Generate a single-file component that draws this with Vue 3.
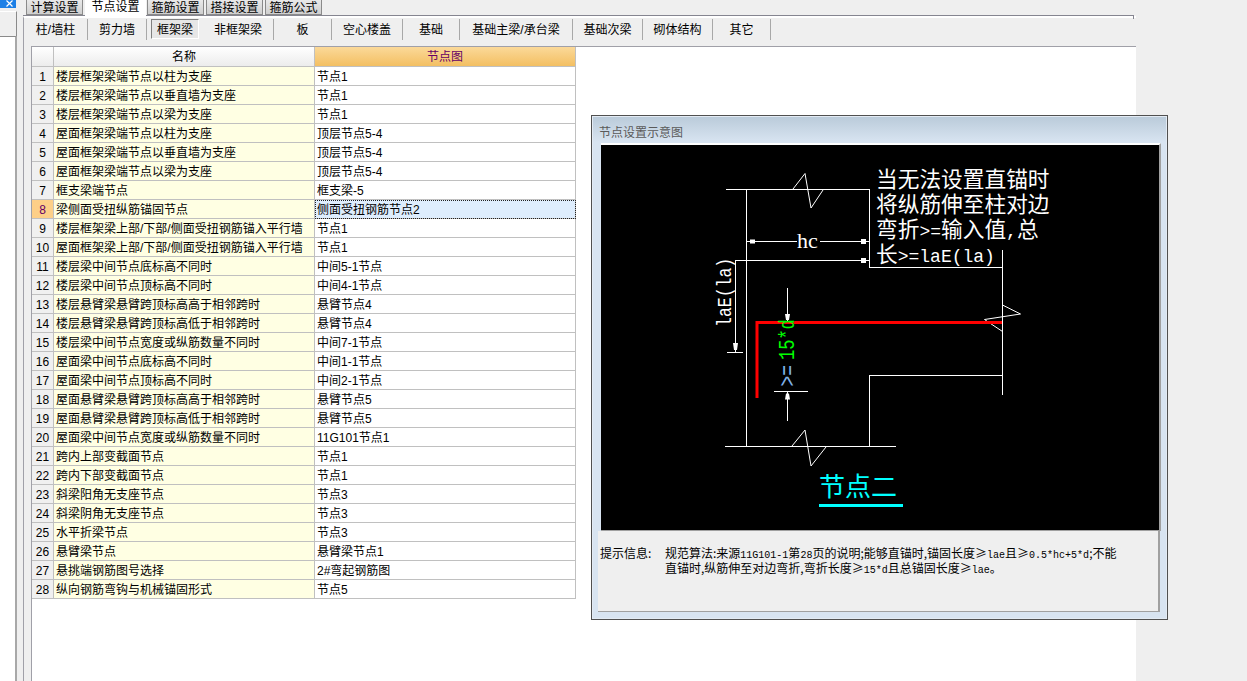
<template>
  <div class="screen">
    <aside class="side">
      <div class="side-close">
        <svg width="16" height="8" viewBox="0 0 16 8">
          <path d="M6.5 0.5L12.5 6.5M12.5 0.5L6.5 6.5" />
        </svg>
      </div>
      <div class="side-head"></div>
      <div class="side-list"></div>
    </aside>

    <main class="main">
      <nav class="tabs">
        <div
          v-for="tab in tabs"
          :key="tab"
          class="tab"
          :class="{ 'tab--active': tab === '节点设置' }"
        >{{ tab }}</div>
      </nav>

      <section class="sheet">
        <div class="subtabs">
          <div
            v-for="item in subTabs"
            :key="item.name"
            class="subtab"
            :class="{ 'subtab--active': item.active }"
            :style="{ width: item.width + 'px' }"
          >{{ item.name }}</div>
        </div>

        <div class="body">
          <div class="gutter"></div>
          <div class="content">
            <div class="grid">
              <div class="cell cell--head"></div>
              <div class="cell cell--head">名称</div>
              <div class="cell cell--head cell--orange">节点图</div>

              <template v-for="(row, index) in rows" :key="index">
                <div class="cell cell--num" :class="{ 'cell--num-on': index === 7 }">{{ index + 1 }}</div>
                <div class="cell cell--name">{{ row[0] }}</div>
                <div class="cell cell--value" :class="{ 'cell--picked': index === 7 }">{{ row[1] }}</div>
              </template>
            </div>
          </div>
        </div>
      </section>
    </main>

    <div class="dialog">
      <div class="dialog-title">节点设置示意图</div>
      <div class="drawing">
        <svg class="cad" width="558" height="385" viewBox="601 145 558 385">
          <g class="lines">
            <path d="M726 189.5H869.5V267.5H1002.5" />
            <path d="M746.5 189.5V446.5" />
            <path d="M1002.5 250V395" />
            <path d="M869.5 446.5V375.5H1002.5" />
            <path d="M725 446.5H896" />
            <path d="M746.5 241.5H797M820 241.5H869" />
            <path d="M735.5 352V260.5H869" />
            <path d="M727 352.5H743" />
            <path d="M787.5 288V322" />
            <path d="M774 391.5H808" />
            <path d="M787.5 391V421" />
          </g>
          <g class="breaks">
            <path d="M793 189L805 173.5L811 208L823 190" />
            <path d="M792 446L805 430L811 466L826 447" />
            <path d="M1002.5 305L1020.5 314L984.5 319.5L1002.5 331.5" />
          </g>
          <g class="heads">
            <path d="M750 239.5h5v4h-5zM861 239h5v5h-5zM861 258h5v5h-5z" />
            <path d="M733 343h5l-1 7h-3zM785 314h5l-1 6h-3zM785 399.5h5l-1-6h-3z" />
          </g>
          <path class="rebar" d="M757 398V322.5H1002" />

          <text class="note" x="876" y="187">当无法设置直锚时</text>
          <text class="note" x="876" y="212">将纵筋伸至柱对边</text>
          <text class="note" x="876" y="237">弯折<tspan class="note-latin">&gt;=</tspan>输入值<tspan class="note-latin">,</tspan>总</text>
          <text class="note" x="876" y="262">长<tspan class="note-latin">&gt;=laE(la)</tspan></text>
          <text class="dim-hc" x="797" y="248">hc</text>
          <text class="dim-side" transform="translate(731 327) rotate(-90) scale(1 1.25)">laE(la)</text>
          <text class="dim-green" transform="translate(794 360) rotate(-90) scale(1 1.25)">15*d</text>
          <text class="dim-blue" transform="translate(795 386.5) rotate(-90) scale(1 1.3)">&gt;=</text>
          <text class="node-name" x="819" y="496">节点二</text>
          <path class="node-line" d="M819 505.5H903" />
        </svg>
      </div>
      <div class="info">
        <div class="info-label">提示信息:</div>
        <div>
          <div>规范算法:来源<span class="lat">11G101-1</span>第<span class="lat">28</span>页的说明;能够直锚时,锚固长度≥<span class="lat">lae</span>且≥<span class="lat">0.5*hc+5*d</span>;不能</div>
          <div>直锚时,纵筋伸至对边弯折,弯折长度≥<span class="lat">15*d</span>且总锚固长度≥<span class="lat">lae</span>。</div>
        </div>
      </div>
    </div>
  </div>
</template>

<script setup>
const tabs = ['计算设置', '节点设置', '箍筋设置', '搭接设置', '箍筋公式']

const subTabs = [
  { name: '柱/墙柱', width: 64 },
  { name: '剪力墙', width: 59 },
  { name: '框架梁', width: 48, active: true },
  { name: '非框架梁', width: 71 },
  { name: '板', width: 58 },
  { name: '空心楼盖', width: 71 },
  { name: '基础', width: 57 },
  { name: '基础主梁/承台梁', width: 113 },
  { name: '基础次梁', width: 70 },
  { name: '砌体结构', width: 70 },
  { name: '其它', width: 58 },
]

const rows = [
  ['楼层框架梁端节点以柱为支座', '节点1'],
  ['楼层框架梁端节点以垂直墙为支座', '节点1'],
  ['楼层框架梁端节点以梁为支座', '节点1'],
  ['屋面框架梁端节点以柱为支座', '顶层节点5-4'],
  ['屋面框架梁端节点以垂直墙为支座', '顶层节点5-4'],
  ['屋面框架梁端节点以梁为支座', '顶层节点5-4'],
  ['框支梁端节点', '框支梁-5'],
  ['梁侧面受扭纵筋锚固节点', '侧面受扭钢筋节点2'],
  ['楼层框架梁上部/下部/侧面受扭钢筋锚入平行墙', '节点1'],
  ['屋面框架梁上部/下部/侧面受扭钢筋锚入平行墙', '节点1'],
  ['楼层梁中间节点底标高不同时', '中间5-1节点'],
  ['楼层梁中间节点顶标高不同时', '中间4-1节点'],
  ['楼层悬臂梁悬臂跨顶标高高于相邻跨时', '悬臂节点4'],
  ['楼层悬臂梁悬臂跨顶标高低于相邻跨时', '悬臂节点4'],
  ['楼层梁中间节点宽度或纵筋数量不同时', '中间7-1节点'],
  ['屋面梁中间节点底标高不同时', '中间1-1节点'],
  ['屋面梁中间节点顶标高不同时', '中间2-1节点'],
  ['屋面悬臂梁悬臂跨顶标高高于相邻跨时', '悬臂节点5'],
  ['屋面悬臂梁悬臂跨顶标高低于相邻跨时', '悬臂节点5'],
  ['屋面梁中间节点宽度或纵筋数量不同时', '11G101节点1'],
  ['跨内上部变截面节点', '节点1'],
  ['跨内下部变截面节点', '节点1'],
  ['斜梁阳角无支座节点', '节点3'],
  ['斜梁阴角无支座节点', '节点3'],
  ['水平折梁节点', '节点3'],
  ['悬臂梁节点', '悬臂梁节点1'],
  ['悬挑端钢筋图号选择', '2#弯起钢筋图'],
  ['纵向钢筋弯钩与机械锚固形式', '节点5'],
]
</script>

<style>
html,
body {
  margin: 0;
  background: #efefef;
  overflow: hidden;
}
</style>

<style scoped>
.screen {
  position: relative;
  display: flex;
  width: 1247px;
  height: 681px;
  overflow: hidden;
  background: #efefef;
  color: #000;
  font-family: "Liberation Sans", "Noto Sans CJK SC", sans-serif;
  font-size: 12px;
}

.side {
  display: flex;
  flex-direction: column;
  flex: none;
  width: 17px;
  box-sizing: border-box;
}

.side-close {
  height: 8px;
  width: 16px;
  background: #1c7fe6;
}

.side-close svg {
  display: block;
}

.side-close path {
  fill: none;
  stroke: #fff;
  stroke-width: 1.2;
}

.side-head {
  height: 25px;
  border-top: 1px solid #fff;
  border-right: 1px solid #8a8a8a;
  margin-top: 3px;
  box-sizing: border-box;
}

.side-list {
  flex: 1;
  background: #fff;
  border-top: 1px solid #8a8a8a;
  border-right: 2px solid #a8a8a8;
}

.main {
  flex: none;
  width: 1119px;
  margin-left: 6px;
  display: flex;
  flex-direction: column;
}

.tabs {
  display: flex;
  height: 15px;
  padding-left: 3px;
  flex: none;
}

.tab {
  width: 57px;
  margin-right: 2px;
  height: 15px;
  box-sizing: border-box;
  border: 1px solid #8a8a8a;
  border-top: 0;
  background: linear-gradient(#e9e9e9, #cfcfcf);
  text-align: center;
  line-height: 17px;
  overflow: hidden;
}

.tab--active {
  width: 61px;
  height: 16px;
  margin-right: 1px;
  position: relative;
  z-index: 1;
  background: #fff;
  border: 0;
  line-height: 15px;
}

.sheet {
  position: relative;
  flex: 1;
  width: 1113px;
  display: flex;
  flex-direction: column;
  border-top: 1px solid #858590;
  box-sizing: border-box;
}

.sheet::before {
  content: "";
  position: absolute;
  top: -1px;
  right: 0;
  width: 2px;
  height: 1px;
  background: #efefef;
}

.sheet::after {
  content: "";
  position: absolute;
  top: -1px;
  right: 2px;
  width: 1px;
  height: 4px;
  background: #858590;
}

.subtabs {
  display: flex;
  align-items: flex-start;
  height: 28px;
  flex: none;
  border-top: 2px solid #fff;
  border-left: 1px solid #a0a0a8;
}

.subtab {
  height: 21px;
  margin-top: 1px;
  box-sizing: border-box;
  border-right: 1px solid #a8a8a8;
  text-align: center;
  line-height: 22px;
}

.subtab--active {
  margin: 1px 4px 0;
  height: 20px;
  border: 1px solid;
  border-color: #808080 #fff #fff #808080;
  background: #e6e6e6;
  line-height: 20px;
}

.body {
  flex: 1;
  display: flex;
  min-height: 0;
}

.gutter {
  width: 7px;
  flex: none;
  border-left: 1px solid #a0a0a8;
}

.content {
  flex: 1;
  background: #fff;
  border-top: 1px solid #a0a0a8;
  border-left: 1px solid #a0a0a8;
}

.grid {
  display: grid;
  grid-template-columns: 22px 261px 261px;
  grid-template-rows: 20px repeat(28, 19px);
  width: 544px;
}

.cell {
  box-sizing: border-box;
  border-right: 1px solid #c0c0c0;
  border-bottom: 1px solid #c0c0c0;
  line-height: 20px;
  white-space: nowrap;
  overflow: hidden;
}

.cell--head {
  background: linear-gradient(#fff, #ececec);
  text-align: center;
  line-height: 21px;
}

.cell--orange {
  background: linear-gradient(#fbd999, #f3bf62);
  color: #660066;
}

.cell--num {
  background: #f0f0f0;
  text-align: center;
}

.cell--num-on {
  background: #fdcf88;
  color: #660066;
}

.cell--name {
  background: #ffffe3;
  padding-left: 2px;
}

.cell--value {
  padding-left: 2px;
}

.cell--picked {
  background: #deedfd;
  outline: 1px dotted #222;
  outline-offset: -1px;
}

.dialog {
  position: absolute;
  left: 591px;
  top: 115px;
  width: 577px;
  height: 505px;
  box-sizing: border-box;
  border: 1px solid #505050;
  box-shadow: inset 0 0 0 1px #e3ebf4;
  background: linear-gradient(#b9cad9, #d8e4f1 26px);
  padding: 1px 8px 0 9px;
}

.dialog-title {
  height: 26px;
  margin-left: -2px;
  color: #5a5a5a;
  line-height: 32px;
}

.drawing {
  width: 558px;
  height: 385px;
  border-top: 2px solid #fff;
  border-right: 2px solid #a0a0a0;
  border-bottom: 1px solid #a0a0a0;
  background: #000;
}

.cad {
  display: block;
}

.lines path,
.breaks path {
  fill: none;
  stroke: #fff;
  stroke-width: 1;
}

.lines path {
  shape-rendering: crispEdges;
}

.heads path {
  fill: #fff;
}

.rebar {
  fill: none;
  stroke: #f00;
  stroke-width: 3;
}

.note {
  fill: #fff;
  font-family: "Noto Sans CJK SC", sans-serif;
  font-size: 21.7px;
}

.note-latin {
  font-family: "Liberation Mono", monospace;
  font-size: 18px;
}

.dim-hc {
  fill: #fff;
  font-family: "Liberation Serif", serif;
  font-size: 22px;
}

.dim-side {
  fill: #fff;
  font-family: "Liberation Mono", monospace;
  font-size: 16.5px;
}

.dim-green {
  fill: #00ff00;
  font-family: "Liberation Mono", monospace;
  font-size: 17px;
}

.dim-blue {
  fill: #7fb0e6;
  font-family: "Liberation Mono", monospace;
  font-size: 18px;
}

.node-name {
  fill: #00ffff;
  font-family: "Noto Sans CJK SC", sans-serif;
  font-size: 26px;
}

.node-line {
  fill: none;
  stroke: #00ffff;
  stroke-width: 3;
}

.info {
  display: flex;
  margin: 0 -3px;
  width: 562px;
  height: 81px;
  box-sizing: border-box;
  padding: 16px 0 0 2px;
  background: #efefef;
  border-right: 2px solid #a0a0a0;
  border-bottom: 1px solid #a0a0a0;
  font-family: "Noto Sans CJK SC", sans-serif;
  line-height: 12px;
  white-space: nowrap;
}

.info-label {
  width: 65px;
  flex: none;
}

.lat {
  font-family: "Liberation Mono", monospace;
  font-size: 10px;
}
</style>
